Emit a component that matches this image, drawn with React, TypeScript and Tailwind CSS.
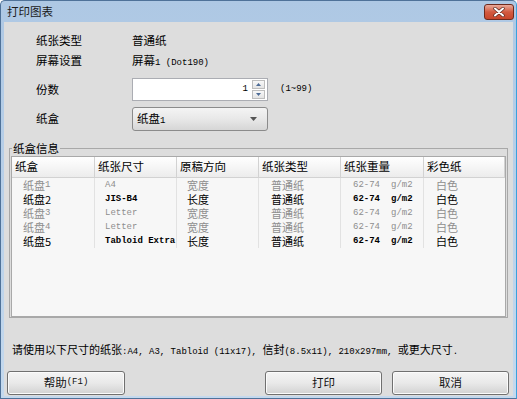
import React from "react";

const M = ({ children, className = "" }: { children: React.ReactNode; className?: string }) => (
  <span className={`font-['Liberation_Mono',monospace] text-[9px] ${className}`}>{children}</span>
);

const trays = [
  { n: "1", size: "A4", dir: "宽度", on: false },
  { n: "2", size: "JIS-B4", dir: "长度", on: true },
  { n: "3", size: "Letter", dir: "宽度", on: false },
  { n: "4", size: "Letter", dir: "宽度", on: false },
  { n: "5", size: "Tabloid Extra", dir: "长度", on: true },
];

const cols = "grid grid-cols-[83px_82px_82px_82px_83px_81px]";

const Btn = ({ children, className = "" }: { children: React.ReactNode; className?: string }) => (
  <button
    className={`h-[24px] rounded-[3px] border border-[#707070] bg-gradient-to-b from-[#f4f4f4] via-[#e9e9e9] to-[#d2d2d2] text-[11.5px] text-[#111] flex items-center justify-center shadow-[inset_0_0_0_1px_#fbfbfb] ${className}`}
  >
    {children}
  </button>
);

export default function App() {
  return (
    <div className="w-[517px] h-[399px] flex flex-col rounded-t-[5px] border border-[#4f7299] border-r-[#3aa2dd] bg-gradient-to-b from-[#aec8e4] to-[#c4d9ee] font-['Noto_Sans_CJK_SC',sans-serif] text-black overflow-hidden">
      {/* title bar */}
      <div className="h-[21px] shrink-0 flex justify-between pl-[6px] pr-[2px]">
        <span className="text-[11.5px] leading-[21px] text-[#1b1b1b]">打印图表</span>
        <div className="mt-[3px] w-[30px] h-[16px] rounded-[3px] border border-[#6e2a1d] bg-gradient-to-b from-[#e9aa9b] via-[#d25a40] to-[#c8462b] flex items-center justify-center">
          <svg width="12" height="10" viewBox="0 0 12 10">
            <path d="M2 1.5 L10 8.5 M10 1.5 L2 8.5" stroke="#5a2a22" strokeWidth="3.4" strokeLinecap="round" />
            <path d="M2 1.5 L10 8.5 M10 1.5 L2 8.5" stroke="#ffffff" strokeWidth="2" strokeLinecap="round" />
          </svg>
        </div>
      </div>

      {/* content */}
      <div className="flex-1 mx-[3px] mb-[2px] bg-[#dddddd] flex flex-col text-[11.5px]">
        <div className="pt-[9px] pl-[32px]">
          <div className="h-[20px] flex items-center">
            <span className="w-[96px]">纸张类型</span>
            <span>普通纸</span>
          </div>
          <div className="h-[20px] flex items-center">
            <span className="w-[96px]">屏幕设置</span>
            <span>
              屏幕<M>1 (Dot190)</M>
            </span>
          </div>
          <div className="mt-[7px] h-[23px] flex items-center">
            <span className="w-[96px]">份数</span>
            <div className="w-[136px] h-[23px] bg-white border border-[#abadb3] flex items-center justify-end">
              <M className="mr-[4px]">1</M>
              <div className="w-[13px] h-[19px] mr-[2px] flex flex-col gap-[1px]">
                <div className="flex-1 border border-[#bdbdbd] bg-gradient-to-b from-[#f8f8f8] to-[#e4e4e4] flex items-center justify-center">
                  <svg width="5" height="3" viewBox="0 0 5 3"><path d="M0 3 L2.5 0 L5 3 Z" fill="#4c6a95" /></svg>
                </div>
                <div className="flex-1 border border-[#bdbdbd] bg-gradient-to-b from-[#f8f8f8] to-[#e4e4e4] flex items-center justify-center">
                  <svg width="5" height="3" viewBox="0 0 5 3"><path d="M0 0 L5 0 L2.5 3 Z" fill="#4c6a95" /></svg>
                </div>
              </div>
            </div>
            <M className="ml-[12px]">(1~99)</M>
          </div>
          <div className="mt-[6px] h-[24px] flex items-center">
            <span className="w-[96px]">纸盒</span>
            <div className="w-[136px] h-[24px] rounded-[3px] border border-[#8b8b8b] bg-gradient-to-b from-[#f4f4f4] via-[#e8e8e8] to-[#d6d6d6] flex items-center justify-between pl-[4px] pr-[10px]">
              <span>
                纸盘<M>1</M>
              </span>
              <svg width="7" height="4" viewBox="0 0 7 4"><path d="M0 0 L7 0 L3.5 4 Z" fill="#555" /></svg>
            </div>
          </div>
        </div>

        {/* group box */}
        <div className="relative mt-[17px] mx-[5px] border border-[#a8a8a8] pt-[7px] px-[1px]">
          <span className="absolute -top-[9px] left-[2px] px-[1px] bg-[#dddddd] leading-[16px]">纸盒信息</span>
          <div className="h-[161px] border border-[#a9a9a9] bg-[#f7f7f7] flex flex-col">
            <div className={`${cols} h-[21px] border-b border-[#d2d2d2] bg-gradient-to-b from-white to-[#ececec]`}>
              {["纸盒", "纸张尺寸", "原稿方向", "纸张类型", "纸张重量", "彩色纸"].map((h) => (
                <div key={h} className="pl-[3px] flex items-center border-r border-[#d2d2d2]">
                  {h}
                </div>
              ))}
            </div>
            {trays.map((t) => {
              const c = t.on ? "text-black" : "text-[#8e8e8e]";
              const mb = t.on ? "font-bold" : "";
              return (
                <div key={t.n} className={`${cols} h-[14px] text-[11px] leading-[13px] whitespace-nowrap overflow-hidden ${c}`}>
                  <div className="h-[14px] pl-[11px] flex items-center border-r border-[#e2e2e2]">
                    纸盘{t.on ? t.n : <M>{t.n}</M>}
                  </div>
                  <div className="h-[14px] pl-[10px] flex items-center overflow-hidden border-r border-[#e2e2e2]">
                    <M className={mb}>{t.size}</M>
                  </div>
                  <div className="h-[14px] pl-[10px] flex items-center border-r border-[#e2e2e2]">{t.dir}</div>
                  <div className="h-[14px] pl-[12px] flex items-center border-r border-[#e2e2e2]">普通纸</div>
                  <div className="h-[14px] pl-[12px] flex items-center border-r border-[#e2e2e2]">
                    <M className={`w-[38px] ${mb}`}>62-74</M>
                    <M className={mb}>g/m2</M>
                  </div>
                  <div className="h-[14px] pl-[12px] flex items-center">白色</div>
                </div>
              );
            })}
          </div>
        </div>

        <div className="mt-[23px] pl-[8px] leading-[16px] text-[11px] whitespace-nowrap">
          请使用以下尺寸的纸张<M>:A4, A3, Tabloid (11x17), </M>信封<M>(8.5x11), 210x297mm, </M>或更大尺寸<M>.</M>
        </div>

        <div className="mt-[11px] pl-[3px] pr-[4px] flex justify-between">
          <Btn className="w-[118px]">
            帮助<M>(F1)</M>
          </Btn>
          <div className="flex gap-[10px]">
            <Btn className="w-[117px]">打印</Btn>
            <Btn className="w-[117px]">取消</Btn>
          </div>
        </div>
      </div>
    </div>
  );
}
